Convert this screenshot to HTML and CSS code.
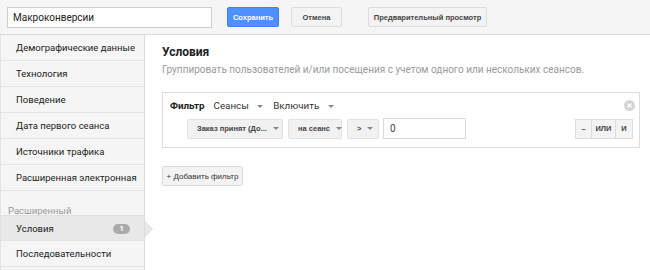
FILE: index.html
```html
<!DOCTYPE html>
<html lang="ru">
<head>
    <meta charset="UTF-8">
    <title>Макроконверсии</title>
    <link rel="stylesheet" href="styles.css">
</head>
<body>

<div class="topbar">
    <input class="name-input" type="text" value="Макроконверсии">
    <button class="btn btn-primary">Сохранить</button>
    <button class="btn btn-cancel">Отмена</button>
    <button class="btn btn-preview">Предварительный просмотр</button>
</div>

<div class="layout">
    <ul class="sidebar">
        <li class="nav-item">Демографические данные</li>
        <li class="nav-item">Технология</li>
        <li class="nav-item">Поведение</li>
        <li class="nav-item">Дата первого сеанса</li>
        <li class="nav-item">Источники трафика</li>
        <li class="nav-item">Расширенная электронная</li>
        <li class="nav-label">Расширенный</li>
        <li class="nav-item active">Условия <span class="badge">1</span></li>
        <li class="nav-item">Последовательности</li>
    </ul>

    <div class="content">
        <h2>Условия</h2>
        <p class="hint">Группировать пользователей и/или посещения с учетом одного или нескольких сеансов.</p>

        <div class="filter-box">
            <div class="filter-head">
                <b>Фильтр</b>
                <span class="drop">Сеансы <i class="caret"></i></span>
                <span class="drop">Включить <i class="caret"></i></span>
                <span class="close-icon">
                    <svg width="11" height="11" viewBox="0 0 11 11">
                        <circle cx="5.5" cy="5.5" r="5.5" fill="#d4d4d4"/>
                        <path d="M3.5 3.5 L7.5 7.5 M7.5 3.5 L3.5 7.5" stroke="#fff" stroke-width="1.4"/>
                    </svg>
                </span>
            </div>
            <div class="filter-row">
                <span class="select sel-metric">Заказ принят (До... <i class="caret"></i></span>
                <span class="select sel-scope">на сеанс <i class="caret"></i></span>
                <span class="select sel-op">&gt; <i class="caret"></i></span>
                <input class="value-input" type="text" value="0">
                <div class="logic">
                    <span class="logic-btn lb-minus">&ndash;</span>
                    <span class="logic-btn lb-or">ИЛИ</span>
                    <span class="logic-btn lb-and">И</span>
                </div>
            </div>
        </div>

        <button class="btn btn-add">+ Добавить фильтр</button>
    </div>
</div>

</body>
</html>
```

FILE: styles.css
```css
body {
    font-family: Roboto, "Liberation Sans", Arial, sans-serif;
    margin: 0;
    padding: 0;
    background-color: #fff;
    color: #222;
    width: 650px;
    height: 270px;
    overflow: hidden;
}

.topbar {
    display: flex;
    align-items: center;
    height: 35px;
    padding-left: 7px;
    background-color: #f5f5f5;
    border-bottom: 1px solid #d9d9d9;
    box-sizing: border-box;
}

.name-input {
    width: 205px;
    height: 21px;
    box-sizing: border-box;
    border: 1px solid #ccc;
    padding: 0 5px;
    font-family: Roboto, sans-serif;
    font-size: 10px;
    color: #222;
    margin-right: 15px;
}

.btn {
    height: 20px;
    padding: 0;
    font-family: "Liberation Sans", Arial, sans-serif;
    font-size: 7.5px;
    font-weight: bold;
    white-space: nowrap;
    border-radius: 2px;
    border: 1px solid #dcdcdc;
    background-color: #f3f3f3;
    color: #444;
    box-sizing: border-box;
}

.btn-primary {
    width: 52px;
    background-color: #4d90fe;
    border-color: #3d80ee;
    color: #fff;
    margin-right: 12px;
}

.btn-cancel {
    width: 51px;
    margin-right: 26px;
}

.btn-preview {
    width: 119px;
}

.layout {
    display: flex;
}

.sidebar {
    list-style: none;
    margin: 0;
    padding: 0;
    width: 145px;
    height: 235px;
    background-color: #f5f5f5;
    border-left: 1px solid #e3e3e3;
    border-right: 1px solid #dcdcdc;
    box-sizing: border-box;
    font-size: 9.5px;
    white-space: nowrap;
}

.nav-item {
    position: relative;
    height: 26px;
    line-height: 25px;
    padding-left: 15px;
    border-bottom: 1px solid #e3e3e3;
    box-sizing: border-box;
    color: #222;
}

.nav-label {
    height: 24px;
    padding-left: 7px;
    line-height: 40px;
    font-size: 9.5px;
    color: #999;
    box-sizing: border-box;
}

.nav-item.active {
    background-color: #e8e8e8;
    border-top: 1px solid #e0e0e0;
}

.nav-item.active::before {
    content: "";
    position: absolute;
    right: -9px;
    top: 5px;
    width: 0;
    height: 0;
    border-top: 8px solid transparent;
    border-bottom: 8px solid transparent;
    border-left: 8px solid #dcdcdc;
}

.nav-item.active::after {
    content: "";
    position: absolute;
    right: -8px;
    top: 6px;
    width: 0;
    height: 0;
    border-top: 7px solid transparent;
    border-bottom: 7px solid transparent;
    border-left: 7px solid #e8e8e8;
}

.badge {
    position: absolute;
    right: 14px;
    top: 8px;
    width: 17px;
    height: 10px;
    line-height: 10px;
    border-radius: 5px;
    background-color: #aaa;
    color: #fff;
    font-size: 8px;
    font-weight: bold;
    text-align: center;
}

.content {
    flex: 1;
    padding: 10px 10px 0 17px;
}

.content h2 {
    margin: 0;
    font-size: 12px;
    font-weight: bold;
    color: #222;
}

.hint {
    margin: 5px 0 0;
    font-size: 10px;
    color: #9a9a9a;
    white-space: nowrap;
}

.filter-box {
    margin-top: 17px;
    width: 478px;
    height: 56px;
    border: 1px solid #ddd;
    box-sizing: border-box;
    padding: 6px 6px 0 7px;
}

.filter-head {
    display: flex;
    align-items: center;
    font-size: 9.8px;
    height: 13px;
    white-space: nowrap;
}

.filter-head b {
    margin-right: 9px;
}

.drop {
    margin-right: 10px;
    color: #333;
}

.caret {
    display: inline-block;
    width: 0;
    height: 0;
    margin-left: 6px;
    vertical-align: middle;
    border-left: 3px solid transparent;
    border-right: 3px solid transparent;
    border-top: 3px solid #888;
}

.close-icon {
    margin-left: auto;
    display: flex;
    margin-right: -2px;
}

.filter-row {
    display: flex;
    align-items: center;
    margin-top: 6px;
    padding-left: 17px;
}

.select {
    display: flex;
    align-items: center;
    justify-content: space-between;
    height: 20px;
    padding: 0 7px 0 9px;
    box-sizing: border-box;
    background-color: #f1f1f1;
    border: 1px solid #e2e2e2;
    border-radius: 2px;
    font-family: "Liberation Sans", Arial, sans-serif;
    font-size: 7.5px;
    font-weight: bold;
    color: #444;
    white-space: nowrap;
    margin-right: 5px;
}

.sel-metric { width: 96px; }
.sel-scope { width: 54px; }
.sel-op { width: 32px; margin-right: 4px; }

.value-input {
    width: 83px;
    height: 21px;
    box-sizing: border-box;
    border: 1px solid #d9d9d9;
    padding: 0 6px;
    font-family: Roboto, sans-serif;
    font-size: 10px;
    color: #444;
}

.logic {
    display: flex;
    margin-left: auto;
}

.logic-btn {
    height: 20px;
    line-height: 18px;
    text-align: center;
    box-sizing: border-box;
    background-color: #f3f3f3;
    border: 1px solid #ddd;
    margin-left: -1px;
    font-family: "Liberation Sans", Arial, sans-serif;
    font-size: 7.5px;
    font-weight: bold;
    color: #444;
}

.lb-minus { width: 17px; }
.lb-or { width: 25px; }
.lb-and { width: 18px; }

.btn-add {
    margin-top: 18px;
    width: 81px;
    font-weight: normal;
    font-size: 8px;
    color: #333;
}
```
